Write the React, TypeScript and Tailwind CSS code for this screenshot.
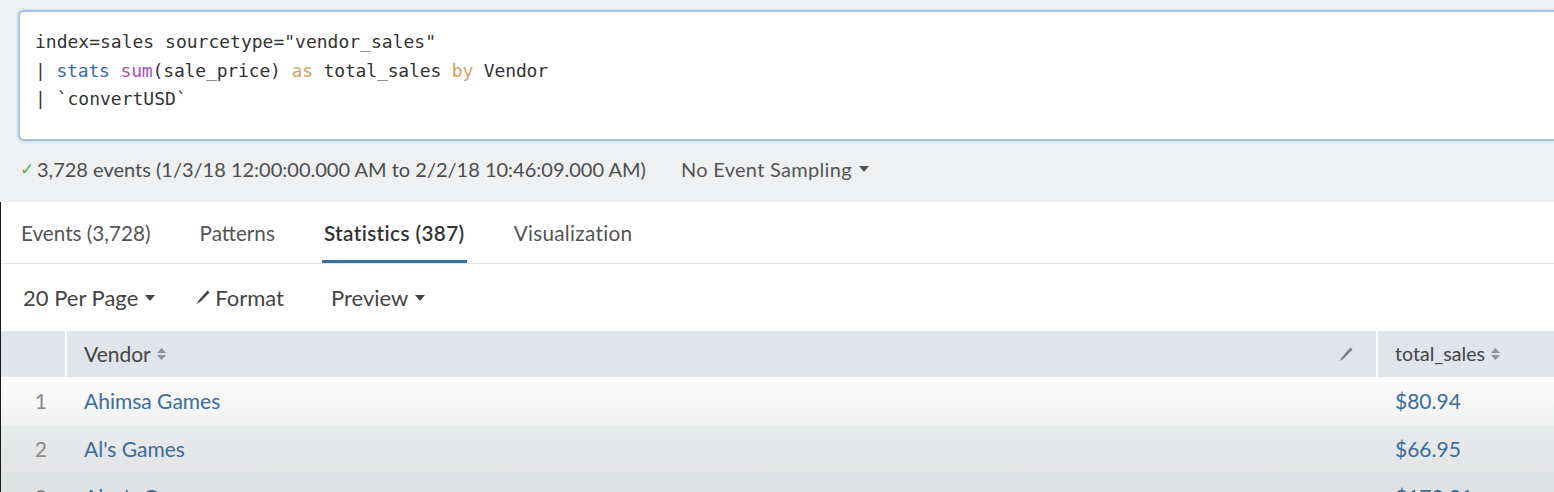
import React from "react";

function Caret() {
  return (
    <svg width="10" height="6" viewBox="0 0 10 6" className="inline-block ml-[7px] mb-[4px]">
      <path d="M0 0H10L5 6Z" fill="currentColor" />
    </svg>
  );
}

function SortIcon() {
  return (
    <svg width="9" height="12" viewBox="0 0 9 12" className="inline-block ml-[6px] mb-[1px]">
      <path d="M4.5 0L9 5H0Z M0 7H9L4.5 12Z" fill="#8e9196" />
    </svg>
  );
}

function Pencil({ color = "#555" }: { color?: string }) {
  return (
    <svg width="15" height="15" viewBox="0 0 14 14" className="inline-block">
      <path d="M11.6 0.4l2 2L5 11l-3.6 2.2 0.6-0.6 -0.6 0.6 2.2-3.6Z" fill={color} />
    </svg>
  );
}

const rows = [
  { n: 1, vendor: "Ahimsa Games", total: "$80.94", bg: "bg-gradient-to-b from-[#fcfcfc] to-[#f1f2f2]" },
  { n: 2, vendor: "Al's Games", total: "$66.95", bg: "bg-gradient-to-b from-[#e9eaeb] to-[#e3e4e5]" },
  { n: 3, vendor: "Alex's Games", total: "$173.31", bg: "bg-[#e0e1e2]" },
];

export default function App() {
  return (
    <div className="w-[1554px] h-[492px] overflow-hidden bg-[#eef0f2] font-['Lato',sans-serif]">
      {/* Search editor */}
      <div className="pt-[10px] pl-[18px]">
        <div className="h-[131px] rounded-l-[6px] border-2 border-r-0 border-[#a7c3e0] bg-white pl-[15px] pt-[16px] shadow-[0_0_3px_rgba(120,160,210,0.5)] font-['DejaVu_Sans_Mono',monospace] text-[18px] leading-[28.5px] text-[#333]">
          <div>index=sales sourcetype="vendor_sales"</div>
          <div className="tracking-[-0.15px]">
            | <span className="text-[#3d6aa8]">stats</span> <span className="text-[#a252bb]">sum</span>(sale_price){" "}
            <span className="text-[#d49f62]">as</span> total_sales <span className="text-[#d49f62]">by</span> Vendor
          </div>
          <div>| `convertUSD`</div>
        </div>
      </div>

      {/* Status line */}
      <div className="h-[61px] flex items-center pl-[20px] pb-[6px] text-[20px] text-[#4d4d4d]">
        <span className="text-[#5aaa5a] mr-[3px] text-[17px]">✓</span>
        <span>3,728 events (1/3/18 12:00:00.000 AM to 2/2/18 10:46:09.000 AM)</span>
        <span className="ml-[35px] text-[#555] tracking-[0.3px]">
          No Event Sampling
          <Caret />
        </span>
      </div>

      {/* Results panel */}
      <div className="bg-white border-l border-[#1c1c1c] h-full">
        {/* Tabs */}
        <div className="h-[62px] flex items-end pl-[20px] gap-[49px] border-b border-[#e2e3e5] text-[20.7px] text-[#555]">
          <div className="pb-[14px]">Events (3,728)</div>
          <div className="pb-[14px]">Patterns</div>
          <div className="pb-[11px] -mx-[2px] px-[2px] border-b-[3px] border-[#3a6f9e] font-semibold text-[#333] tracking-[0.4px]">
            Statistics (387)
          </div>
          <div className="pb-[14px] tracking-[0.3px]">Visualization</div>
        </div>

        {/* Toolbar */}
        <div className="h-[67px] flex items-center pl-[22px] text-[22px] text-[#444] relative">
          <span>
            20 Per Page
            <Caret />
          </span>
          <span className="ml-[40px] flex items-center gap-[5px]">
            <Pencil color="#444" />
            Format
          </span>
          <span className="ml-[47px]">
            Preview
            <Caret />
          </span>
          <span className="absolute right-[-6px] top-[18px] text-[#c4c4c4] text-[22px]">‹</span>
        </div>

        {/* Table */}
        <div className="grid grid-cols-[64px_2px_1309px_2px_177px] text-[21px]">
          <div className="h-[46px] bg-[#e1e4ea]" />
          <div className="bg-white" />
          <div className="h-[46px] bg-[#e1e4ea] flex items-center justify-between pl-[17px] pr-[23px] text-[#444]">
            <span className="flex items-center">
              Vendor
              <SortIcon />
            </span>
            <Pencil color="#7a7d82" />
          </div>
          <div className="bg-white" />
          <div className="h-[46px] bg-[#e1e4ea] flex items-center pl-[17px] text-[#444] text-[19.6px]">
            total_sales
            <SortIcon />
          </div>

          {rows.map((r) => (
            <React.Fragment key={r.n}>
              <div className={`col-span-5 h-[48px] grid grid-cols-[64px_2px_1309px_2px_177px] items-center ${r.bg}`}>
                <div className="text-right pr-[18px] text-[#8a8a8a]">{r.n}</div>
                <div />
                <div className="pl-[17px] text-[#3b6c9b]">{r.vendor}</div>
                <div />
                <div className="pl-[17px] text-[#3b6c9b]">{r.total}</div>
              </div>
            </React.Fragment>
          ))}
        </div>
      </div>
    </div>
  );
}
